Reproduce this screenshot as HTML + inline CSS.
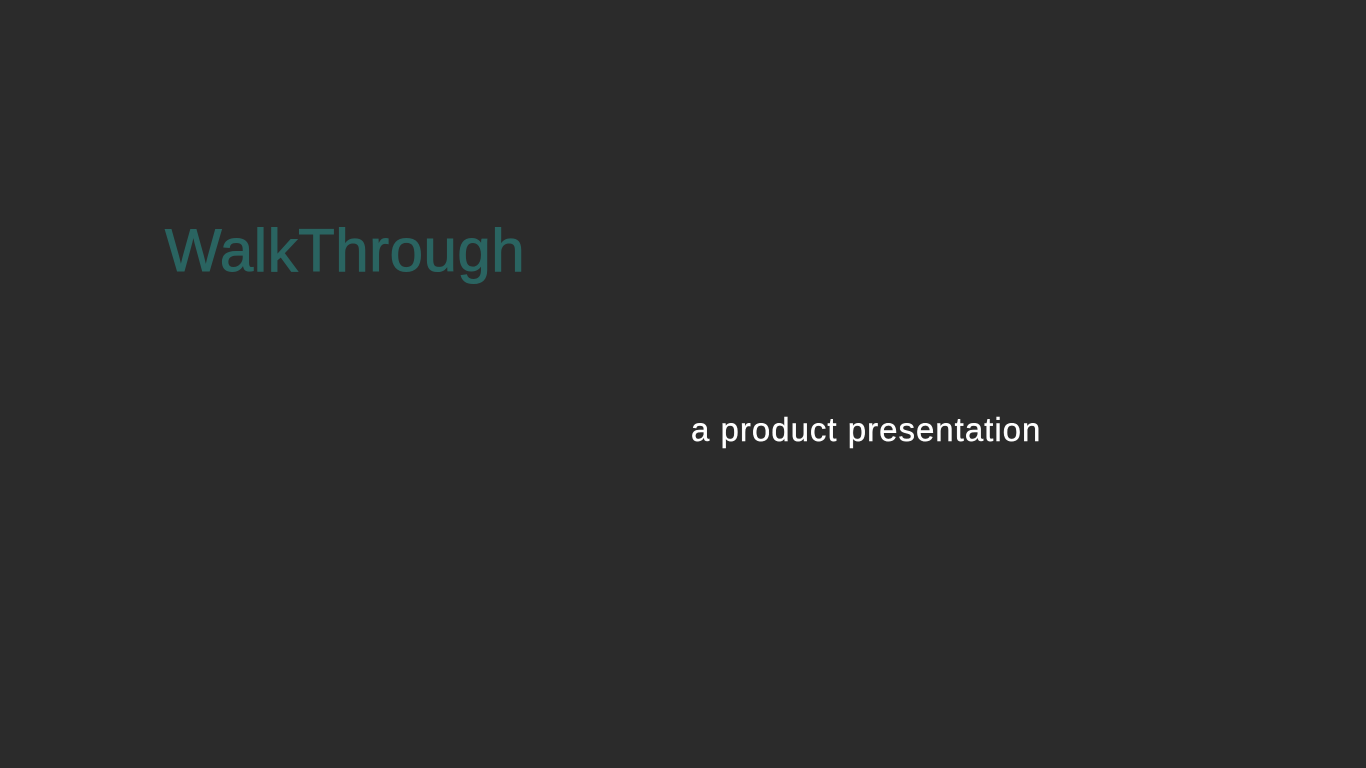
<!DOCTYPE html>
<html><head><meta charset="utf-8"><style>
html,body{margin:0;padding:0;width:1366px;height:768px;background:#2b2b2b;overflow:hidden}
.t{position:absolute;left:165px;top:211px;font-family:"Liberation Sans",sans-serif;font-size:60px;line-height:80px;color:#2a6461;letter-spacing:0.5px;white-space:nowrap;-webkit-text-stroke:1px #2a6461}
.s{position:absolute;left:691px;top:410px;font-family:"Liberation Sans",sans-serif;font-size:33px;line-height:40px;color:#fff;letter-spacing:1px;white-space:nowrap;-webkit-text-stroke:0.4px #fff}
</style></head><body>
<div class="t">WalkThrough</div>
<div class="s">a product presentation</div>
</body></html>
